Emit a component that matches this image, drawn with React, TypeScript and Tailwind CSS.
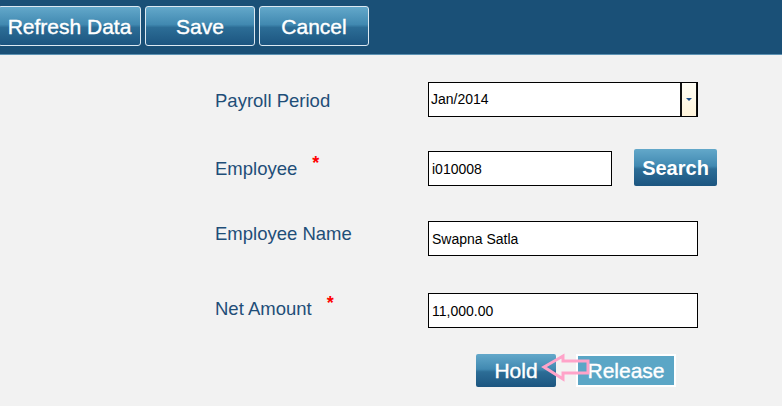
import React from 'react';

const font = "font-['Liberation_Sans',Arial,sans-serif]";
const glossy =
    'bg-[linear-gradient(to_bottom,#63a8ca_0%,#4189b1_46%,#2c6d96_54%,#1c5580_100%)]';
const heavy = '[-webkit-text-stroke:0.4px_white]';

function TopButton({ label, className }: { label: string; className: string }) {
    return (
        <button
            className={`h-[40px] rounded-[3px] border border-[#dce9f2] ${glossy} text-[21px] leading-none text-white ${heavy} ${className}`}
        >
            {label}
        </button>
    );
}

function Label({ text, required, className = '' }: { text: string; required?: boolean; className?: string }) {
    return (
        <div className={`w-[213px] text-[18.5px] text-[#1f4e78] ${className}`}>
            {text}
            {required && <span className="relative -top-[6px] ml-[15px] text-[18px] font-bold text-[#ff0000]">*</span>}
        </div>
    );
}

function TextBox({ value, width }: { value: string; width: string }) {
    return (
        <input
            readOnly
            value={value}
            className={`h-[35px] ${width} border border-black bg-white px-[3px] text-[14px] text-black outline-none ${font}`}
        />
    );
}

export default function App() {
    return (
        <div className={`relative h-[406px] w-[782px] overflow-hidden bg-[#f2f2f2] ${font}`}>
            {/* Toolbar */}
            <div className="flex h-[55px] gap-[4px] border-b border-[#5d92b3] bg-[#1a5077] pt-[6px]">
                <TopButton label="Refresh Data" className="-ml-[2px] w-[143px]" />
                <TopButton label="Save" className="w-[110px]" />
                <TopButton label="Cancel" className="w-[110px]" />
            </div>

            {/* Form */}
            <div className="flex flex-col pl-[215px] pt-[27px]">
                <div className="flex h-[35px] items-center">
                    <Label text="Payroll Period" className="mt-[2px]" />
                    <div className="flex h-[35px] w-[270px] items-stretch border border-black bg-white">
                        <div className="flex flex-1 items-center px-[2px] text-[14px] text-black">Jan/2014</div>
                        <div className="flex w-[17px] items-center justify-center border-l-[2px] border-r border-[#111] bg-[linear-gradient(to_bottom,#fffef6,#fff4da)]">
                            <div className="mb-[1px] h-0 w-0 border-x-[3px] border-t-[3px] border-x-transparent border-t-[#1f4f87]" />
                        </div>
                    </div>
                </div>

                <div className="mt-[34px] flex h-[35px] items-center">
                    <Label text="Employee" required />
                    <TextBox value="i010008" width="w-[184px]" />
                    <button
                        className={`ml-[22px] h-[37px] w-[83px] -translate-y-[1px] rounded-[2px] ${glossy} text-[20px] font-bold leading-none text-white`}
                    >
                        Search
                    </button>
                </div>

                <div className="mt-[35px] flex h-[35px] items-center">
                    <Label text="Employee Name" className="-mt-[9px]" />
                    <TextBox value="Swapna Satla" width="w-[270px]" />
                </div>

                <div className="mt-[37px] flex h-[35px] items-center">
                    <Label text="Net Amount" required className="-mt-[3px]" />
                    <TextBox value="11,000.00" width="w-[270px]" />
                </div>

                <div className="ml-[261px] mt-[26px] flex h-[33px] gap-[20px]">
                    <button className={`w-[80px] rounded-[2px] ${glossy} text-[21px] leading-none text-white ${heavy}`}>
                        Hold
                    </button>
                    <button className={`w-[100px] border-2 border-white bg-[#5ba6c6] text-[21px] leading-none text-white ${heavy}`}>
                        Release
                    </button>
                </div>
            </div>

            {/* Annotation arrow */}
            <svg className="absolute left-[540px] top-[352px]" width="52" height="32" viewBox="0 0 52 32">
                <polygon
                    points="4,15 23,4 23,9 48,9 48,21 23,21 23,27"
                    fill="none"
                    stroke="#ffa3c9"
                    strokeWidth="3"
                    strokeLinejoin="miter"
                />
            </svg>
        </div>
    );
}
